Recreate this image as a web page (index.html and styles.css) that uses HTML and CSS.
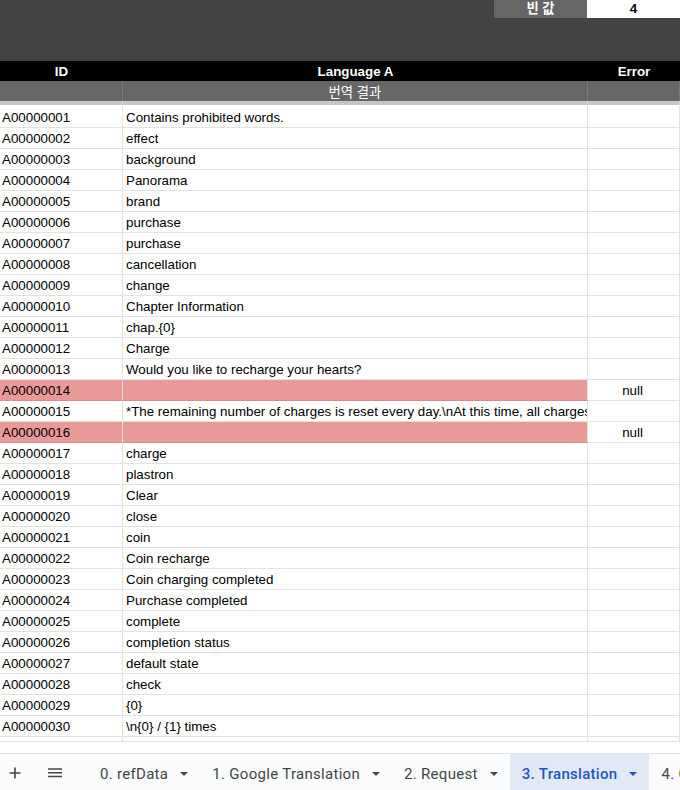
FILE: index.html
```html
<!DOCTYPE html>
<html lang="ko">
<head>
<meta charset="utf-8">
<title>3. Translation</title>
<link rel="stylesheet" href="styles.css">
</head>
<body>
<div class="page">
  <div class="topbar">
    <div class="stat-label">빈 값</div>
    <div class="stat-value">4</div>
  </div>
  <div class="head-row">
    <div class="hc">ID</div>
    <div class="hc">Language A</div>
    <div class="hc">Error</div>
  </div>
  <div class="sub-row">
    <div class="sc"></div>
    <div class="sc">번역 결과</div>
    <div class="sc"></div>
  </div>
  <div class="band"><div class="bc"></div><div class="bc"></div><div class="bc"></div></div>
  <div class="rows">
    <div class="row first"><div class="c id">A00000001</div><div class="c txt">Contains prohibited words.</div><div class="c err"></div></div>
    <div class="row"><div class="c id">A00000002</div><div class="c txt">effect</div><div class="c err"></div></div>
    <div class="row"><div class="c id">A00000003</div><div class="c txt">background</div><div class="c err"></div></div>
    <div class="row"><div class="c id">A00000004</div><div class="c txt">Panorama</div><div class="c err"></div></div>
    <div class="row"><div class="c id">A00000005</div><div class="c txt">brand</div><div class="c err"></div></div>
    <div class="row"><div class="c id">A00000006</div><div class="c txt">purchase</div><div class="c err"></div></div>
    <div class="row"><div class="c id">A00000007</div><div class="c txt">purchase</div><div class="c err"></div></div>
    <div class="row"><div class="c id">A00000008</div><div class="c txt">cancellation</div><div class="c err"></div></div>
    <div class="row"><div class="c id">A00000009</div><div class="c txt">change</div><div class="c err"></div></div>
    <div class="row"><div class="c id">A00000010</div><div class="c txt">Chapter Information</div><div class="c err"></div></div>
    <div class="row"><div class="c id">A00000011</div><div class="c txt">chap.{0}</div><div class="c err"></div></div>
    <div class="row"><div class="c id">A00000012</div><div class="c txt">Charge</div><div class="c err"></div></div>
    <div class="row"><div class="c id">A00000013</div><div class="c txt">Would you like to recharge your hearts?</div><div class="c err"></div></div>
    <div class="row bad"><div class="c id">A00000014</div><div class="c txt"></div><div class="c err">null</div></div>
    <div class="row"><div class="c id">A00000015</div><div class="c txt">*The remaining number of charges is reset every day.\nAt this time, all charges</div><div class="c err"></div></div>
    <div class="row bad"><div class="c id">A00000016</div><div class="c txt"></div><div class="c err">null</div></div>
    <div class="row"><div class="c id">A00000017</div><div class="c txt">charge</div><div class="c err"></div></div>
    <div class="row"><div class="c id">A00000018</div><div class="c txt">plastron</div><div class="c err"></div></div>
    <div class="row"><div class="c id">A00000019</div><div class="c txt">Clear</div><div class="c err"></div></div>
    <div class="row"><div class="c id">A00000020</div><div class="c txt">close</div><div class="c err"></div></div>
    <div class="row"><div class="c id">A00000021</div><div class="c txt">coin</div><div class="c err"></div></div>
    <div class="row"><div class="c id">A00000022</div><div class="c txt">Coin recharge</div><div class="c err"></div></div>
    <div class="row"><div class="c id">A00000023</div><div class="c txt">Coin charging completed</div><div class="c err"></div></div>
    <div class="row"><div class="c id">A00000024</div><div class="c txt">Purchase completed</div><div class="c err"></div></div>
    <div class="row"><div class="c id">A00000025</div><div class="c txt">complete</div><div class="c err"></div></div>
    <div class="row"><div class="c id">A00000026</div><div class="c txt">completion status</div><div class="c err"></div></div>
    <div class="row"><div class="c id">A00000027</div><div class="c txt">default state</div><div class="c err"></div></div>
    <div class="row"><div class="c id">A00000028</div><div class="c txt">check</div><div class="c err"></div></div>
    <div class="row"><div class="c id">A00000029</div><div class="c txt">{0}</div><div class="c err"></div></div>
    <div class="row"><div class="c id">A00000030</div><div class="c txt">\n{0} / {1} times</div><div class="c err"></div></div>
    <div class="row stub"><div class="c id"></div><div class="c txt"></div><div class="c err"></div></div>
  </div>
  <div class="filler"></div>
  <div class="tabbar">
    <div class="tb-icon plus">
      <svg width="12" height="12" viewBox="0 0 12 12"><path d="M6 0.5v11M0.5 6h11" stroke="#444746" stroke-width="1.6" fill="none"/></svg>
    </div>
    <div class="tb-icon menu">
      <svg width="14" height="10" viewBox="0 0 14 10"><path d="M0 1h14M0 4.8h14M0 8.6h14" stroke="#444746" stroke-width="1.5" fill="none"/></svg>
    </div>
    <div class="tabs">
      <div class="tab"><span>0. refData</span><i class="caret"></i></div>
      <div class="tab"><span>1. Google Translation</span><i class="caret"></i></div>
      <div class="tab"><span>2. Request</span><i class="caret"></i></div>
      <div class="tab active"><span>3. Translation</span><i class="caret"></i></div>
      <div class="tab"><span>4. C</span></div>
    </div>
  </div>
</div>
</body>
</html>
```

FILE: styles.css
```css
* { box-sizing: border-box; }
html, body { margin: 0; padding: 0; background: #fff; }
.page {
  width: 680px;
  height: 790px;
  overflow: hidden;
  display: flex;
  flex-direction: column;
  font-family: "Liberation Sans", Arial, sans-serif;
  font-size: 13.333px;
  color: #000;
}
.topbar {
  height: 61px;
  flex: none;
  background: #434343;
  display: flex;
  justify-content: flex-end;
  align-items: flex-start;
}
.stat-label, .stat-value {
  height: 18px;
  line-height: 18px;
  text-align: center;
  font-weight: bold;
  font-size: 13.333px;
  font-family: "Liberation Sans", "Noto Sans CJK KR", sans-serif;
}
.stat-label { width: 93px; background: #666666; color: #fff; }
.stat-value { width: 93px; background: #fff; color: #000; }

.head-row, .sub-row, .band, .row {
  display: grid;
  grid-template-columns: 123px 465px 1fr;
  flex: none;
}
.head-row { height: 20px; background: #000; color: #fff; }
.hc {
  padding-top: 1px;
  line-height: 19px;
  text-align: center;
  font-weight: bold;
}
.sub-row { height: 20px; background: #666666; color: #fff; }
.sc {
  padding-top: 3px;
  line-height: 17px;
  text-align: center;
  border-right: 1px solid #7a7a7a;
  font-family: "Liberation Sans", "Noto Sans CJK KR", sans-serif;
}
.band { height: 4px; background: #c6c6c6; }
.bc { border-right: 1px solid #d9d9d9; }

.rows { display: flex; flex-direction: column; flex: none; }
.row { height: 21px; }
.row.first { height: 23px; }
.c {
  border-right: 1px solid #e2e2e2;
  border-bottom: 1px solid #e2e2e2;
  line-height: 18px;
  white-space: nowrap;
  overflow: hidden;
  display: flex;
  align-items: flex-end;
}
.c.id { padding-left: 2px; }
.c.txt { padding-left: 3px; }
.c.err { justify-content: center; padding-right: 2px; }
.row.bad .id, .row.bad .txt { background: #ea9999; border-bottom-color: #d98a8a; }
.row.stub { height: 5px; }
.row.stub .c { line-height: 4px; }

.filler { flex: 1; background: #fff; }

.tabbar {
  height: 37px;
  flex: none;
  background: #f9fbfd;
  border-top: 1px solid #e1e3e6;
  display: flex;
  align-items: stretch;
  font-family: Roboto, "Open Sans", sans-serif;
  font-size: 15px;
  color: #444746;
  white-space: nowrap;
}
.tb-icon { display: flex; align-items: center; justify-content: center; flex: none; padding-top: 2px; }
.tb-icon.plus { width: 30px; }
.tb-icon.menu { width: 50px; }
.tabs { display: flex; align-items: stretch; padding-left: 8px; }
.tab {
  display: flex;
  align-items: center;
  padding: 3px 12px 0;
  gap: 12px;
  flex: none;
  letter-spacing: 0.3px;
}
.tab.active { background: #e1e9f7; color: #1f55c5; font-weight: 500; }
.caret {
  width: 0; height: 0;
  border-left: 4px solid transparent;
  border-right: 4px solid transparent;
  border-top: 4px solid #444746;
}
.tab.active .caret { border-top-color: #1f55c5; }
```
